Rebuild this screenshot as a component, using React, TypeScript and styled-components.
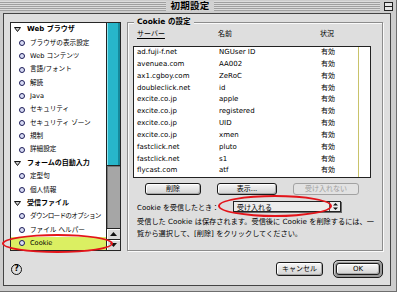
import React from 'react';
import styled, { createGlobalStyle } from 'styled-components';

const GlobalStyle = createGlobalStyle`
  html, body {
    margin: 0;
    padding: 0;
  }
  body {
    width: 397px;
    height: 292px;
    overflow: hidden;
    background: #c8c8c8;
    font-family: 'DejaVu Sans', 'Noto Sans CJK JP', sans-serif;
    font-size: 7px;
    color: #000;
  }
`;

const Window = styled.div`
  position: relative;
  width: 397px;
  height: 292px;
  display: flex;
  flex-direction: column;
  background: #cdcdcd;
  box-sizing: border-box;
  border-right: 1px solid #6e6e6e;
  border-bottom: 1px solid #6e6e6e;
`;

const TitleBar = styled.div`
  flex: none;
  height: 13px;
  display: flex;
  align-items: center;
  gap: 4px;
  padding: 0 3px 1px 0;
  box-sizing: border-box;
`;

const Stripes = styled.div`
  flex: 1;
  height: 10px;
  display: flex;
  justify-content: center;
  align-items: center;
  background: repeating-linear-gradient(to bottom, #dcdcdc 0 1px, #a0a0a0 1px 2px);
`;

const TitleText = styled.span`
  padding: 0 4px;
  background: #d2d2d2;
  font-size: 9.5px;
  font-weight: bold;
  line-height: 10px;
  letter-spacing: 0.3px;
`;

const ShadeBox = styled.div`
  width: 9px;
  height: 9px;
  box-sizing: border-box;
  border: 1px solid #222;
  background: linear-gradient(#222, #222) center / 100% 1px no-repeat, #e6e6e6;
`;

const Body = styled.div`
  flex: 1;
  margin: 0 5px 6px 3px;
  border: 1px solid #444;
  background: #dedede;
  display: flex;
  flex-direction: column;
  padding: 3px 7px 7px 6px;
`;

const MainRow = styled.div`
  height: 234px;
  display: flex;
  align-items: flex-start;
  gap: 6px;
`;

/* ---------- left category list ---------- */

const CategoryList = styled.div`
  margin-top: 5px;
  width: 111px;
  height: 229px;
  box-sizing: border-box;
  border: 1px solid #262626;
  background: #fff;
  display: flex;
`;

const Items = styled.div`
  flex: 1;
  display: flex;
  flex-direction: column;
  overflow: hidden;
`;

const ItemRow = styled.div<{ $header?: boolean; $selected?: boolean; $condensed?: boolean }>`
  height: 13.35px;
  flex: none;
  display: flex;
  align-items: center;
  gap: ${p => (p.$header ? '6px' : '5px')};
  padding-left: ${p => (p.$header ? '3px' : '8px')};
  background: ${p => (p.$selected ? '#dbef62' : 'transparent')};
  font-size: ${p => (p.$header ? '7px' : '6.6px')};
  font-weight: ${p => (p.$header ? 'bold' : 'normal')};
  letter-spacing: ${p => (p.$condensed ? '-0.7px' : '0')};
  white-space: nowrap;
  line-height: 1;
`;

const Bullet = styled.span`
  width: 6px;
  height: 6px;
  box-sizing: border-box;
  border-radius: 50%;
  border: 1.6px solid #1c1c58;
  background: #d8dcf4;
  flex: none;
`;

const Scrollbar = styled.div`
  width: 13px;
  border-left: 1px solid #222;
  display: flex;
  flex-direction: column;
`;

const Thumb = styled.div`
  height: 142px;
  background: #27b6ca;
  box-shadow: inset 1px 0 0 #8ae4f0, inset -2px 0 0 #15899b;
  border-bottom: 1px solid #222;
`;

const Track = styled.div`
  flex: 1;
  background: #a6a6a6;
  box-shadow: inset 1px 1px 0 #777;
`;

const ArrowButton = styled.div`
  height: 10px;
  border-top: 1px solid #222;
  background: #dadada;
  box-shadow: inset 1px 1px 0 #fff;
  display: flex;
  align-items: center;
  justify-content: center;
`;

/* ---------- right group ---------- */

const Group = styled.fieldset`
  flex: 1;
  min-width: 0;
  height: 234px;
  margin: 0;
  box-sizing: border-box;
  border: 1px solid #8c8c8c;
  box-shadow: inset 1px 1px 0 #fafafa, 1px 1px 0 #fafafa;
  padding: 0 11px 0 5px;
  display: flex;
  flex-direction: column;
`;

const Legend = styled.legend`
  margin-left: 1px;
  padding: 0 3px;
  background: #dedede;
  font-size: 7.5px;
  font-weight: bold;
  line-height: 10px;
`;

const ColumnGrid = styled.div`
  display: grid;
  grid-template-columns: 82px 102px 1fr;
  white-space: nowrap;
`;

const HeaderRow = styled(ColumnGrid)`
  margin-top: 2px;
  height: 11px;
  line-height: 11px;
  padding-left: 4px;
  grid-template-columns: 81px 102px 1fr;
`;

const SortedHeader = styled.span`
  text-decoration: underline;
  text-underline-offset: 2px;
`;

const CookieBox = styled.div`
  margin-top: 6px;
  height: 132px;
  box-sizing: border-box;
  border: 1px solid #222;
  background: #fff;
  display: flex;
`;

const CookieRows = styled.div`
  flex: 1;
`;

const CookieRow = styled(ColumnGrid)`
  height: 11.85px;
  line-height: 11.85px;
  padding-left: 3px;
`;

const EmptyScroll = styled.div`
  width: 11px;
  border-left: 1px solid #c9c36a;
`;

const ButtonRow = styled.div`
  margin-top: 5px;
  display: flex;
  justify-content: center;
  gap: 16px;
`;

const Button = styled.div<{ $w: number; $disabled?: boolean; $h?: number }>`
  width: ${p => p.$w}px;
  height: ${p => p.$h ?? 12}px;
  box-sizing: border-box;
  border: 1px solid ${p => (p.$disabled ? '#a2a2a2' : '#1a1a1a')};
  border-radius: 3px;
  background: ${p => (p.$disabled ? '#e2e2e2' : 'linear-gradient(#f6f6f6, #d2d2d2)')};
  box-shadow: ${p => (p.$disabled ? 'none' : 'inset 1px 1px 0 #fff, inset -1px -1px 0 #a8a8a8')};
  color: ${p => (p.$disabled ? '#a0a0a0' : '#000')};
  display: flex;
  align-items: center;
  justify-content: center;
  white-space: nowrap;
  line-height: 1;
`;

const PopupRow = styled.div`
  margin-top: 6px;
  display: grid;
  grid-template-columns: 96px 108px;
  align-items: center;
  padding-left: 4px;
  white-space: nowrap;
`;

const Popup = styled.div`
  height: 11px;
  box-sizing: border-box;
  border: 1px solid #222;
  background: #ececec;
  box-shadow: 1px 1px 0 #6a6a6a;
  display: flex;
  align-items: center;
`;

const PopupLabel = styled.span`
  flex: 1;
  padding-left: 3px;
`;

const PopupArrows = styled.span`
  width: 10px;
  height: 100%;
  border-left: 1px solid #555;
  display: flex;
  align-items: center;
  justify-content: center;
`;

const Description = styled.p`
  margin: 4px 0 0;
  padding-left: 4px;
  font-size: 7.2px;
  line-height: 12px;
  white-space: nowrap;
`;

/* ---------- footer ---------- */

const Footer = styled.div`
  margin-top: 9px;
  height: 18px;
  display: flex;
  align-items: center;
`;

const HelpIcon = styled.span`
  width: 11px;
  height: 11px;
  box-sizing: border-box;
  border: 1.5px solid #111;
  border-radius: 50%;
  display: flex;
  align-items: center;
  justify-content: center;
  font-size: 8px;
  font-weight: bold;
  line-height: 1;
  margin-left: 1px;
`;

const Spacer = styled.div`
  flex: 1;
`;

const DefaultRing = styled.div`
  margin-left: 10px;
  width: 50px;
  height: 18px;
  box-sizing: border-box;
  border: 1px solid #1a1a1a;
  border-radius: 5px;
  background: #9a9a9a;
  box-shadow: inset 1px 1px 0 #d0d0d0;
  display: flex;
  align-items: center;
  justify-content: center;
`;

const Ellipse = styled.div<{ $x: number; $y: number; $w: number; $h: number }>`
  position: absolute;
  left: ${p => p.$x}px;
  top: ${p => p.$y}px;
  width: ${p => p.$w}px;
  height: ${p => p.$h}px;
  box-sizing: border-box;
  border: 2.5px solid #e3141a;
  border-radius: 50%;
  pointer-events: none;
`;

const Triangle = () => (
  <svg width="7" height="5" viewBox="0 0 7 5">
    <polygon points="0.5,0.5 6.5,0.5 3.5,4.5" fill="#c8c8c8" stroke="#111" strokeWidth="1" />
  </svg>
);

const categories: { label: string; header?: boolean; selected?: boolean; condensed?: boolean }[] = [
  { label: 'Web ブラウザ', header: true },
  { label: 'ブラウザの表示設定' },
  { label: 'Web コンテンツ' },
  { label: '言語/フォント' },
  { label: '解読' },
  { label: 'Java' },
  { label: 'セキュリティ' },
  { label: 'セキュリティ ゾーン' },
  { label: '規制' },
  { label: '詳細設定' },
  { label: 'フォームの自動入力', header: true },
  { label: '定型句' },
  { label: '個人情報' },
  { label: '受信ファイル', header: true },
  { label: 'ダウンロードのオプション', condensed: true },
  { label: 'ファイル ヘルパー' },
  { label: 'Cookie', selected: true },
];

const cookies = [
  ['ad.fuji-f.net', 'NGUser ID'],
  ['avenuea.com', 'AA002'],
  ['ax1.cgboy.com', 'ZeRoC'],
  ['doubleclick.net', 'id'],
  ['excite.co.jp', 'apple'],
  ['excite.co.jp', 'registered'],
  ['excite.co.jp', 'UID'],
  ['excite.co.jp', 'xmen'],
  ['fastclick.net', 'pluto'],
  ['fastclick.net', 's1'],
  ['flycast.com', 'atf'],
];

export default function App() {
  return (
    <>
      <GlobalStyle />
      <Window>
        <TitleBar>
          <Stripes>
            <TitleText>初期設定</TitleText>
          </Stripes>
          <ShadeBox />
        </TitleBar>

        <Body>
          <MainRow>
            <CategoryList>
              <Items>
                {categories.map(c => (
                  <ItemRow
                    key={c.label}
                    $header={c.header}
                    $selected={c.selected}
                    $condensed={c.condensed}
                  >
                    {c.header ? <Triangle /> : <Bullet />}
                    <span>{c.label}</span>
                  </ItemRow>
                ))}
              </Items>
              <Scrollbar>
                <Thumb />
                <Track />
                <ArrowButton>
                  <svg width="7" height="4" viewBox="0 0 7 4">
                    <polygon points="3.5,0 7,4 0,4" fill="#111" />
                  </svg>
                </ArrowButton>
                <ArrowButton>
                  <svg width="7" height="4" viewBox="0 0 7 4">
                    <polygon points="0,0 7,0 3.5,4" fill="#111" />
                  </svg>
                </ArrowButton>
              </Scrollbar>
            </CategoryList>

            <Group>
              <Legend>Cookie の設定</Legend>
              <HeaderRow>
                <SortedHeader>サーバー</SortedHeader>
                <span>名前</span>
                <span>状況</span>
              </HeaderRow>
              <CookieBox>
                <CookieRows>
                  {cookies.map(([server, name], i) => (
                    <CookieRow key={i}>
                      <span>{server}</span>
                      <span>{name}</span>
                      <span>有効</span>
                    </CookieRow>
                  ))}
                </CookieRows>
                <EmptyScroll />
              </CookieBox>
              <ButtonRow>
                <Button $w={56}>削除</Button>
                <Button $w={60}>表示...</Button>
                <Button $w={66} $disabled>受け入れない</Button>
              </ButtonRow>
              <PopupRow>
                <span>Cookie を受信したとき：</span>
                <Popup>
                  <PopupLabel>受け入れる</PopupLabel>
                  <PopupArrows>
                    <svg width="5" height="7" viewBox="0 0 5 7">
                      <polygon points="2.5,0 5,2.6 0,2.6" fill="#111" />
                      <polygon points="0,4.4 5,4.4 2.5,7" fill="#111" />
                    </svg>
                  </PopupArrows>
                </Popup>
              </PopupRow>
              <Description>
                受信した Cookie は保存されます。受信後に Cookie を削除するには、一
                <br />
                覧から選択して、[削除] をクリックしてください。
              </Description>
            </Group>
          </MainRow>

          <Footer>
            <HelpIcon>?</HelpIcon>
            <Spacer />
            <Button $w={47} $h={14}>キャンセル</Button>
            <DefaultRing>
              <Button $w={44} $h={12}>OK</Button>
            </DefaultRing>
          </Footer>
        </Body>

        <Ellipse $x={2} $y={234} $w={111} $h={19} />
        <Ellipse $x={218} $y={195} $w={114} $h={22} />
      </Window>
    </>
  );
}
